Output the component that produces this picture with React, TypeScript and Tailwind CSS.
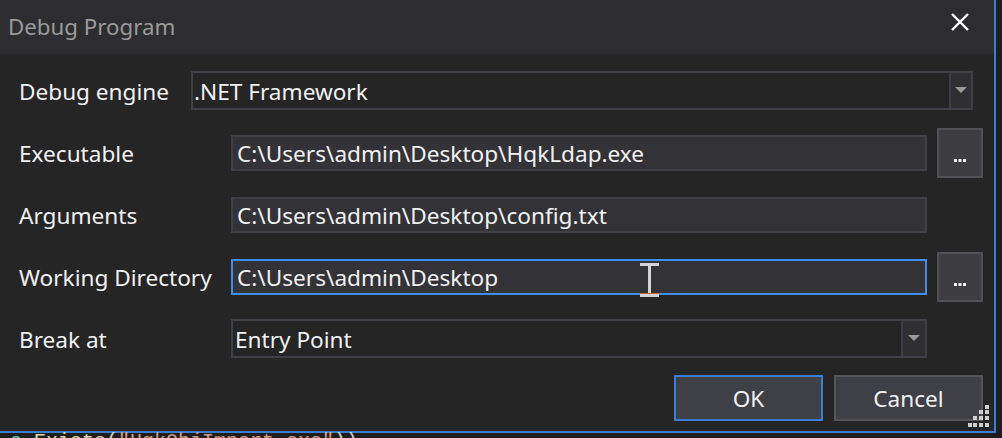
import React from "react";

const Arrow = () => (
  <svg width="12" height="7" viewBox="0 0 12 7">
    <path d="M0 0 H12 L6 6 Z" fill="#999999" />
  </svg>
);

const Dots = () => (
  <svg width="12" height="4" viewBox="0 0 12 4">
    <rect x="0" y="0" width="3" height="3" fill="#f1f1f1" />
    <rect x="4.5" y="0" width="3" height="3" fill="#f1f1f1" />
    <rect x="9" y="0" width="3" height="3" fill="#f1f1f1" />
  </svg>
);

const Label = ({ children, w }: { children: React.ReactNode; w: string }) => (
  <div className={`${w} shrink-0 pl-[19px] pt-[2px] text-[#f1f1f1]`}>{children}</div>
);

const TextBox = ({ value, focused }: { value: string; focused?: boolean }) => (
  <div
    className={
      focused
        ? "flex h-[36px] w-[696px] items-center border-2 border-[#3d8ee8] bg-[#333337] pl-[4px] pt-[2px] text-[#f1f1f1]"
        : "flex h-[36px] w-[696px] items-center border-2 border-[#3f3f46] bg-[#333337] pl-[4px] pt-[2px] text-[#f1f1f1]"
    }
  >
    {value}
  </div>
);

const BrowseButton = () => (
  <div className="ml-[10px] flex h-[50px] w-[46px] items-center justify-center border-2 border-[#525256] bg-[#3e3e42] pt-[16px]">
    <Dots />
  </div>
);

export default function App() {
  return (
    <div className="relative h-[438px] w-[1002px] overflow-hidden bg-[#1e1e1e] font-['Noto_Sans',sans-serif] text-[22.6px]">
      <div className="flex h-[433px] w-[996px] flex-col border-b-2 border-r-2 border-[#3b7fd3] bg-[#252526]">
        {/* title bar */}
        <div className="flex h-[54px] shrink-0 items-center justify-between bg-[#2d2d30] pl-[8px] pr-[24px]">
          <div className="text-[22.3px] text-[#999999]">Debug Program</div>
          <svg width="20" height="18" viewBox="0 0 20 18" className="mb-[10px]">
            <path d="M2 1 L18 17 M18 1 L2 17" stroke="#ffffff" strokeWidth="2.4" />
          </svg>
        </div>

        <div className="flex flex-col pt-[17px]">
          {/* Debug engine */}
          <div className="flex h-[39px] items-center">
            <Label w="w-[191px]">Debug engine</Label>
            <div className="flex h-[39px] w-[782px] border-2 border-[#3f3f46]">
              <div className="flex flex-1 items-center pl-[1px] pt-[2px] text-[#f1f1f1]">.NET Framework</div>
              <div className="flex w-[22px] items-center justify-center border-l-2 border-[#3f3f46] bg-[#2f2f33]">
                <Arrow />
              </div>
            </div>
          </div>

          {/* Executable */}
          <div className="mt-[18px] flex h-[50px] items-center">
            <Label w="w-[231px]">Executable</Label>
            <TextBox value="C:\Users\admin\Desktop\HqkLdap.exe" />
            <BrowseButton />
          </div>

          {/* Arguments */}
          <div className="mt-[19px] flex h-[36px] items-center">
            <Label w="w-[231px]">Arguments</Label>
            <TextBox value="C:\Users\admin\Desktop\config.txt" />
          </div>

          {/* Working Directory */}
          <div className="mt-[19px] flex h-[50px] items-center">
            <Label w="w-[231px]">Working Directory</Label>
            <TextBox value="C:\Users\admin\Desktop" focused />
            <BrowseButton />
          </div>

          {/* Break at */}
          <div className="mt-[17px] flex h-[39px] items-center">
            <Label w="w-[231px]">Break at</Label>
            <div className="flex h-[39px] w-[696px] border-2 border-[#3f3f46]">
              <div className="flex flex-1 items-center pl-[2px] pt-[2px] text-[#f1f1f1]">Entry Point</div>
              <div className="flex w-[24px] items-center justify-center border-l-2 border-[#3f3f46] bg-[#2f2f33]">
                <Arrow />
              </div>
            </div>
          </div>

          {/* buttons */}
          <div className="mt-[17px] flex h-[46px] justify-end pr-[11px]">
            <div className="flex h-[46px] w-[149px] items-center justify-center border-2 border-[#3b7fd3] bg-[#3f3f46] pt-[2px] text-[#f1f1f1]">
              OK
            </div>
            <div className="ml-[11px] flex h-[46px] w-[149px] items-center justify-center border-2 border-[#545458] bg-[#3f3f46] pt-[2px] text-[#f1f1f1]">
              Cancel
            </div>
          </div>
        </div>
      </div>

      {/* code line behind the dialog */}
      <div className="-mt-[1px] whitespace-pre pl-[10px] font-['Liberation_Mono',monospace] text-[20px] leading-[20px]">
        <span className="text-[#4ec9b0]">e</span>
        <span className="text-[#d4d4d4]">.</span>
        <span className="text-[#dcdcaa]">Exists</span>
        <span className="text-[#d4d4d4]">(</span>
        <span className="text-[#d69d85]">"HqkObjImport.exe"</span>
        <span className="text-[#d4d4d4]">))</span>
      </div>

      {/* resize grip */}
      <svg className="absolute left-[968px] top-[405px]" width="22" height="22" viewBox="0 0 22 22">
        {[
          [17, 0],
          [11, 5], [17, 5],
          [5, 11], [11, 11], [17, 11],
          [0, 18], [5, 18], [11, 18], [17, 18],
        ].map(([x, y], i) => (
          <rect key={i} x={x} y={y} width="4" height="4" fill="#cfcfcf" />
        ))}
      </svg>

      {/* I-beam cursor */}
      <svg className="absolute left-[640px] top-[263px]" width="20" height="35" viewBox="0 0 20 35">
        <rect x="0" y="0" width="19" height="3" fill="#d4d4d4" />
        <rect x="8" y="0" width="3" height="34" fill="#d4d4d4" />
        <rect x="0" y="31" width="19" height="3" fill="#d4d4d4" />
        <rect x="0" y="30" width="19" height="1" fill="#d2691e" />
      </svg>
    </div>
  );
}
